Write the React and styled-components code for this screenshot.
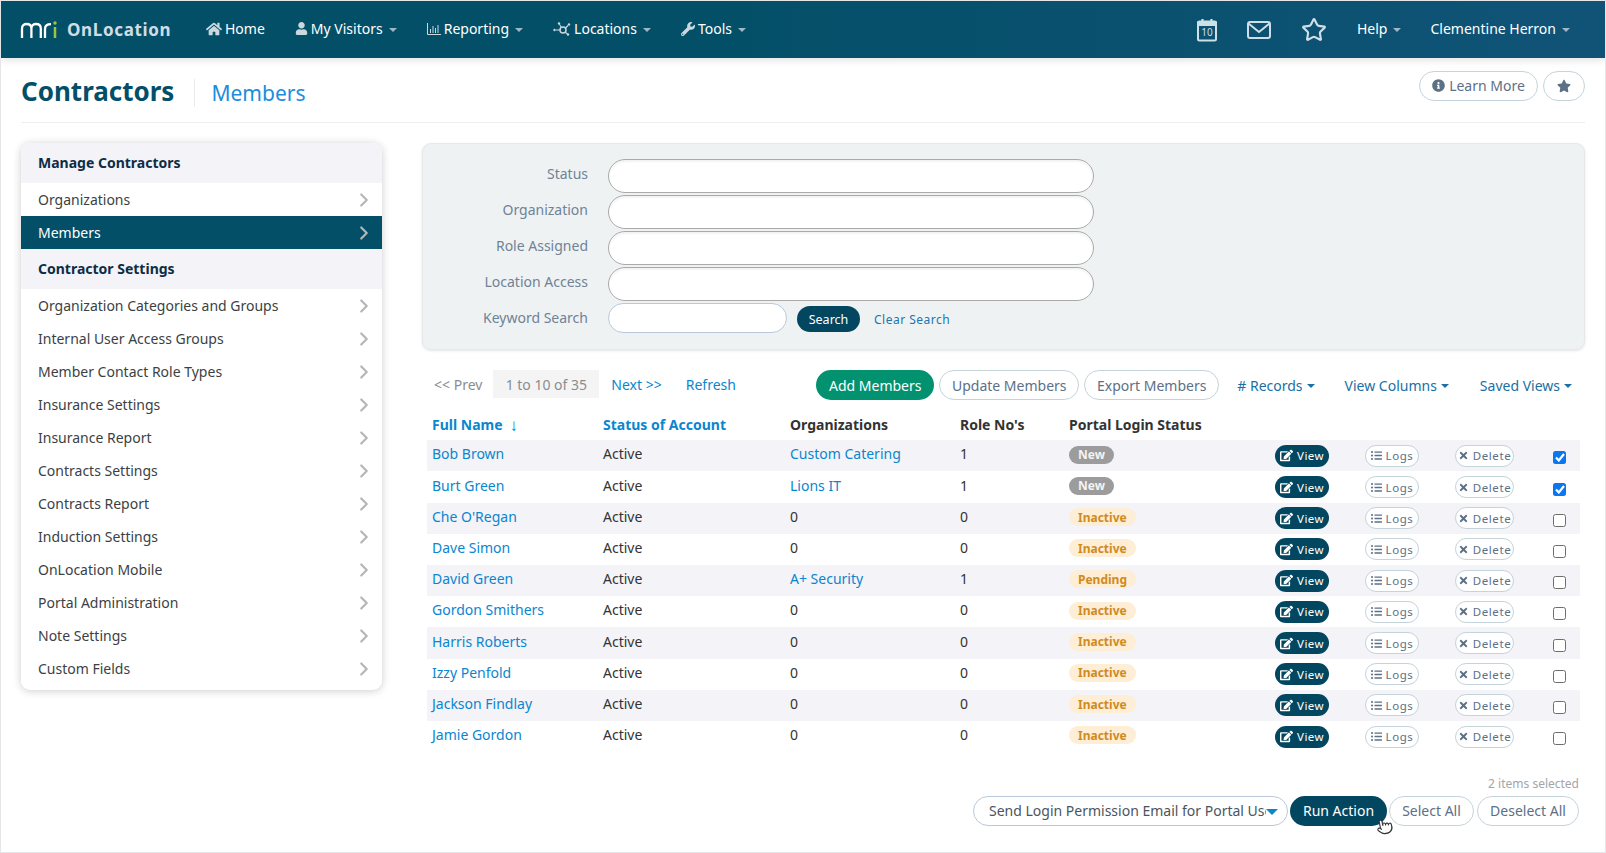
import React from "react";
import styled, { createGlobalStyle } from "styled-components";
import { FaHome, FaUser, FaWrench, FaInfoCircle, FaStar, FaEdit, FaListUl, FaTimes } from "react-icons/fa";
import { Star, Pointer, ChevronRight } from "lucide-react";

const Global = createGlobalStyle`
  html, body { margin: 0; padding: 0; background: #fff; }
  * { box-sizing: border-box; }
  body { font-family: "Noto Sans", "Open Sans", sans-serif; font-size: 14px; color: #333; }
`;

const Page = styled.div`
  width: 1606px; height: 853px; border: 1px solid #e4e6e8; overflow: hidden; display: flex; flex-direction: column;
`;
const Navbar = styled.header`
  height: 57px; flex: none; display: flex; align-items: center; padding: 0 35px 2px 19px;
  background: linear-gradient(90deg, #044f68 0%, #044f68 45%, #105377 100%);
  box-shadow: 0 2px 8px rgba(0,0,0,.12); color: #fff;
`;
const Brand = styled.div`
  display: flex; align-items: center; width: 186px; gap: 9px; margin-top: 2px;
  span { font-weight: 700; font-size: 17px; letter-spacing: .65px; color: #cfdde5; line-height: 1; }
`;
const NavItem = styled.div`
  display: flex; align-items: center; font-size: 14px; color: #fff; margin-right: ${p => p.$mr || 0}px; white-space: nowrap;
  svg.i { color: #cbd8df; margin-right: ${p => p.$ig ?? 3}px; flex: none; }
`;
const Caret = styled.i`
  display: inline-block; width: 0; height: 0; margin-left: ${p => p.$ml ?? 6}px; margin-top: 2px;
  border-left: 4px solid transparent; border-right: 4px solid transparent; border-top: 4px solid ${p => p.$c || "#9fb8c5"};
`;
const NavRight = styled.div`
  margin-left: auto; display: flex; align-items: center;
`;
const IconSlot = styled.div`
  display: flex; margin-right: ${p => p.$mr}px; margin-top: 2px; color: #cfdfe8;
`;
const Container = styled.div`
  flex: 1; padding: 0 20px; display: flex; flex-direction: column;
`;
const TitleRow = styled.div`
  height: 65px; flex: none; display: flex; align-items: center; border-bottom: 1px solid #eceef0;
`;
const Title = styled.h1`
  margin: 0; font-size: 26px; font-weight: 700; color: #034f68; line-height: 28px; padding-right: 20px; margin-top: 1px;
`;
const Sub = styled.div`
  border-left: 1px solid #e8eaec; height: 28px; margin-top: 6px; padding-left: 16px; font-size: 21px; line-height: 28px; color: #1a8ddc;
`;
const TitleActions = styled.div`
  margin-left: auto; display: flex; gap: 5px; margin-top: -9px;
`;
const OutlineBtn = styled.button`
  font-family: inherit; font-size: ${p => p.$fs || 14}px; color: #5c7086; background: #fff; border: 1px solid #c5d3da;
  border-radius: 16px; height: ${p => p.$h || 30}px; width: ${p => p.$w}px; padding: 0; display: inline-flex;
  align-items: center; justify-content: center; gap: 4px; white-space: nowrap; letter-spacing: ${p => p.$ls || 0}px;
`;
const SolidBtn = styled.button`
  font-family: inherit; font-size: ${p => p.$fs || 14}px; color: #fff; background: ${p => p.$bg || "#034660"}; border: 0;
  border-radius: 16px; height: ${p => p.$h || 30}px; width: ${p => p.$w}px; padding: 0; display: inline-flex;
  align-items: center; justify-content: center; gap: 4px; white-space: nowrap; letter-spacing: ${p => p.$ls || 0}px;
`;
const Main = styled.div`
  display: grid; grid-template-columns: 361px 1fr; column-gap: 40px; padding-top: 20px;
`;
const Side = styled.nav`
  background: #fff; border-radius: 9px; box-shadow: 0 1px 8px rgba(0,0,0,.2); overflow: hidden; align-self: start; height: 547px;
`;
const SideHead = styled.div`
  height: 40px; background: #f3f3f8; padding: 0 0 2px 17px; display: flex; align-items: center; font-weight: 700; font-size: 14px; color: #0d2d45;
`;
const SideItem = styled.div`
  height: 33px; padding: 0 7px 0 17px; display: flex; align-items: center; justify-content: space-between; font-size: 14px;
  color: ${p => p.$on ? "#fff" : "#3c3f44"}; background: ${p => p.$on ? "#034f68" : "#fff"};
  svg { color: #b4b6b8; }
`;
const Right = styled.section`
  min-width: 0;
`;
const Filter = styled.div`
  height: 207px; background: #eff2f3; border: 1px solid #e6e9eb; border-radius: 9px; box-shadow: 0 1px 3px rgba(0,0,0,.1);
  padding: 15px 0 0; display: grid; grid-template-columns: 165px 486px; grid-auto-rows: 36px; column-gap: 20px; align-content: start;
`;
const FLabel = styled.label`
  text-align: right; color: #6f8296; font-size: 14px; line-height: 30px;
`;
const Pill = styled.input`
  width: 486px; height: 34px; border: 1px solid #aaa; border-radius: 17px; background: #fff; box-shadow: inset 0 2px 2px rgba(0,0,0,.05); outline: 0; display: block;
`;
const KeywordRow = styled.div`
  display: flex; align-items: flex-start; gap: 10px;
`;
const Keyword = styled.input`
  width: 179px; height: 30px; border: 1px solid #b9c8da; border-radius: 15px; background: #fff; outline: 0; display: block;
`;
const ClearLink = styled.a`
  color: #1a76ad; font-size: 12px; letter-spacing: .5px; margin: 8px 0 0 4px;
`;
const Toolbar = styled.div`
  display: flex; align-items: center; height: 30px; margin-top: 20px; padding-left: 12px;
`;
const Muted = styled.span` color: #8a8d90; `;
const PagerBox = styled.span`
  margin-left: 11px; width: 106px; height: 28px; background: #f4f4f5; color: #8a8d90; display: flex; align-items: center; justify-content: center; margin-top: -2px;
`;
const Blue = styled.a`
  color: ${p => p.$c || "#0a86cf"}; margin-left: ${p => p.$ml || 0}px; margin-top: ${p => p.$mt ?? -2}px; display: inline-flex; align-items: center; white-space: nowrap;
`;
const ToolActions = styled.div`
  margin-left: auto; display: flex; align-items: center; gap: 5px; padding-right: 13px;
`;
const Table = styled.div`
  margin: 10.3px 5px 0 5px; display: grid; grid-template-columns: 171px 187px 170px 109px 206px 90px 90px 95px 35px;
`;
const HeadCell = styled.div`
  height: 30px; padding: 0 0 2px 5px; display: flex; align-items: center; font-weight: 700; font-size: 14px; color: ${p => p.$link ? "#0a86cf" : "#333"}; white-space: nowrap;
`;
const SortArrow = styled.span`
  font-size: 17px; font-weight: 400; margin-left: 7px; line-height: 1;
`;
const Row = styled.div`
  display: contents;
  & > div { background: ${p => p.$odd ? "#f3f3f8" : "#fff"}; }
`;
const Cell = styled.div`
  height: 31.2px; padding: 0 0 4px 5px; display: flex; align-items: center; white-space: nowrap; color: ${p => p.$link ? "#0a86cf" : "#333"};
`;
const BtnCell = styled.div`
  height: 31.2px; padding-left: 5px; display: flex; align-items: center;
`;
const CheckCell = styled.div`
  height: 31.2px; padding: 4px 0 0 8px; display: flex; align-items: center;
`;
const Badge = styled.span`
  height: 18px; border-radius: 9px; padding: 0 9px; font-size: 12px; font-weight: 700; display: inline-flex; align-items: center; margin-top: 1.5px;
  color: ${p => p.$new ? "#f3f3f3" : "#d08a1e"}; background: ${p => p.$new ? "#9c9c9c" : "#fdeed5"};
`;
const Check = styled.span`
  width: 13px; height: 13px; border-radius: 2.5px; display: flex; align-items: center; justify-content: center;
  background: ${p => p.$on ? "#0b76f0" : "#fff"}; border: ${p => p.$on ? "0" : "1px solid #6d6d6d"};
`;
const Footer = styled.div`
  margin-top: 22.7px; display: flex; flex-direction: column; align-items: flex-end; padding-right: 6px;
`;
const Selected = styled.div`
  color: #a3a6a9; font-size: 12px; line-height: 18px; margin-bottom: 3px;
`;
const ActionBar = styled.div`
  position: relative; display: flex; align-items: center;
`;
const Picker = styled.div`
  width: 315px; height: 30px; border: 1px solid #b9c8da; border-radius: 15px; padding: 0 9px 0 15px; display: flex; align-items: center; color: #4b5560; margin-right: 2px;
  span { flex: 1; overflow: hidden; white-space: nowrap; }
`;
const Cursor = styled.div`
  position: absolute; left: 403px; top: 22px; display: flex; transform: rotate(-12deg);
`;

const menu1 = ["Organization Categories and Groups","Internal User Access Groups","Member Contact Role Types","Insurance Settings","Insurance Report","Contracts Settings","Contracts Report","Induction Settings","OnLocation Mobile","Portal Administration","Note Settings","Custom Fields"];
const rows = [
  ["Bob Brown","Custom Catering","1","New",true],
  ["Burt Green","Lions IT","1","New",true],
  ["Che O'Regan","0","0","Inactive",false],
  ["Dave Simon","0","0","Inactive",false],
  ["David Green","A+ Security","1","Pending",false],
  ["Gordon Smithers","0","0","Inactive",false],
  ["Harris Roberts","0","0","Inactive",false],
  ["Izzy Penfold","0","0","Inactive",false],
  ["Jackson Findlay","0","0","Inactive",false],
  ["Jamie Gordon","0","0","Inactive",false],
];

const Logo = () => (
  <svg width="38" height="18" viewBox="0 0 38 18" fill="none" strokeWidth="2.3" strokeLinecap="butt">
    <path d="M2 17V7.500C2 4.500 4 3 6.700 3S11.400 4.500 11.400 7.500V17M11.400 7.500C11.400 4.500 13.400 3 16.100 3S20.800 4.500 20.800 7.500V17" stroke="#fff" />
    <path d="M25 17V8C25 4.800 27 3.200 31 3.200" stroke="#fff" />
    <path d="M35 6V17" stroke="#9ec43c" strokeWidth="2.500" />
    <circle cx="35" cy="2" r="1.700" fill="#9ec43c" stroke="none" />
  </svg>
);
const BarsIcon = () => (
  <svg className="i" width="14" height="12" viewBox="0 0 14 12" fill="none" stroke="#cbd8df" strokeWidth="1">
    <path d="M.5 0v11.500H14M3.500 10V6M6 10V3M8.500 10V5M11 10V2" />
  </svg>
);
const NodesIcon = () => (
  <svg className="i" width="18" height="14" viewBox="0 0 18 14" fill="#cbd8df" stroke="#cbd8df">
    <circle cx="1.500" cy="8" r="1.200" stroke="none" />
    <circle cx="6" cy="1.500" r="1.200" stroke="none" />
    <circle cx="16" cy="2.500" r="1.200" stroke="none" />
    <circle cx="15" cy="12.500" r="1.200" stroke="none" />
    <circle cx="10" cy="8" r="3" fill="none" strokeWidth="1.500" />
    <path d="M3 8h4M6.500 2.500l2 3M15 3.500l-3 3M14.500 12l-2.500-2" fill="none" strokeWidth="1.100" />
  </svg>
);
const CalendarIcon = () => (
  <svg width="22" height="24" viewBox="0 0 22 24" fill="none" stroke="#cfdfe8" strokeWidth="2">
    <rect x="2" y="3.500" width="18" height="19" rx="1.500" />
    <path d="M2 4.500h18v2.500H2z" fill="#cfdfe8" />
    <path d="M6.500 1v4M15.500 1v4" strokeWidth="2.200" />
    <text x="11" y="18" textAnchor="middle" fontSize="10" fontFamily="Noto Sans" fill="#cfdfe8" stroke="none">10</text>
  </svg>
);
const MailIcon = () => (
  <svg width="24" height="18" viewBox="0 0 24 18" fill="none" stroke="#cfdfe8" strokeWidth="2">
    <rect x="1" y="1" width="22" height="16" rx="2" />
    <path d="M1.500 2.500 12 11 22.500 2.500" />
  </svg>
);
const Tick = () => (
  <svg width="10" height="9" viewBox="0 0 10 9" fill="none" stroke="#fff" strokeWidth="2.200"><path d="M1 4.500 3.800 7.500 9 1" /></svg>
);
const BlueTri = () => <Caret $ml={0} $c="#0a86cf" style={{ borderLeftWidth: 6, borderRightWidth: 6, borderTopWidth: 6 }} />;
const Chev = () => <ChevronRight size={22} strokeWidth={2.4} />;

export default function App() {
  return (
    <>
      <Global />
      <Page>
        <Navbar>
          <Brand><Logo /><span>OnLocation</span></Brand>
          <NavItem $mr={30}><FaHome className="i" size={16} />Home</NavItem>
          <NavItem $mr={30}><FaUser className="i" size={13} />My Visitors<Caret /></NavItem>
          <NavItem $mr={30}><BarsIcon />Reporting<Caret /></NavItem>
          <NavItem $mr={30}><NodesIcon />Locations<Caret /></NavItem>
          <NavItem><FaWrench className="i" size={14} />Tools<Caret /></NavItem>
          <NavRight>
            <IconSlot $mr={29}><CalendarIcon /></IconSlot>
            <IconSlot $mr={30}><MailIcon /></IconSlot>
            <IconSlot $mr={30}><Star size={26} strokeWidth={2} /></IconSlot>
            <NavItem $mr={29}>Help<Caret /></NavItem>
            <NavItem>Clementine Herron<Caret /></NavItem>
          </NavRight>
        </Navbar>
        <Container>
          <TitleRow>
            <Title>Contractors</Title>
            <Sub>Members</Sub>
            <TitleActions>
              <OutlineBtn $w={119}><FaInfoCircle size={13} />Learn More</OutlineBtn>
              <OutlineBtn $w={42}><FaStar size={14} /></OutlineBtn>
            </TitleActions>
          </TitleRow>
          <Main>
            <Side>
              <SideHead>Manage Contractors</SideHead>
              <SideItem>Organizations<Chev /></SideItem>
              <SideItem $on>Members<Chev /></SideItem>
              <SideHead>Contractor Settings</SideHead>
              {menu1.map(m => <SideItem key={m}>{m}<Chev /></SideItem>)}
            </Side>
            <Right>
              <Filter>
                <FLabel>Status</FLabel><Pill />
                <FLabel>Organization</FLabel><Pill />
                <FLabel>Role Assigned</FLabel><Pill />
                <FLabel>Location Access</FLabel><Pill />
                <FLabel>Keyword Search</FLabel>
                <KeywordRow>
                  <Keyword />
                  <SolidBtn $w={63} $h={26} $fs={12.5} style={{ marginTop: 3 }}>Search</SolidBtn>
                  <ClearLink>Clear Search</ClearLink>
                </KeywordRow>
              </Filter>
              <Toolbar>
                <Muted style={{ marginTop: -2 }}>&lt;&lt; Prev</Muted>
                <PagerBox>1 to 10 of 35</PagerBox>
                <Blue $ml={12}>Next &gt;&gt;</Blue>
                <Blue $ml={24}>Refresh</Blue>
                <ToolActions>
                  <SolidBtn $w={118} $bg="#029270">Add Members</SolidBtn>
                  <OutlineBtn $w={140}>Update Members</OutlineBtn>
                  <OutlineBtn $w={135}>Export Members</OutlineBtn>
                  <Blue $c="#1a6fa3" $ml={13} $mt={0}># Records<Caret $ml={4} $c="#1a6fa3" /></Blue>
                  <Blue $c="#1a6fa3" $ml={25} $mt={0}>View Columns<Caret $ml={4} $c="#1a6fa3" /></Blue>
                  <Blue $c="#1a6fa3" $ml={26} $mt={0}>Saved Views<Caret $ml={4} $c="#1a6fa3" /></Blue>
                </ToolActions>
              </Toolbar>
              <Table>
                <HeadCell $link>Full Name<SortArrow>↓</SortArrow></HeadCell>
                <HeadCell $link>Status of Account</HeadCell>
                <HeadCell>Organizations</HeadCell>
                <HeadCell>Role No's</HeadCell>
                <HeadCell>Portal Login Status</HeadCell>
                <HeadCell /><HeadCell /><HeadCell /><HeadCell />
                {rows.map(([name, org, role, status, on], i) => (
                  <Row key={name} $odd={i % 2 === 0}>
                    <Cell $link>{name}</Cell>
                    <Cell>Active</Cell>
                    <Cell $link={org !== "0"}>{org}</Cell>
                    <Cell>{role}</Cell>
                    <Cell><Badge $new={status === "New"}>{status}</Badge></Cell>
                    <BtnCell><SolidBtn $w={54} $h={22} $fs={11.5} $ls={0.4}><FaEdit size={13} />View</SolidBtn></BtnCell>
                    <BtnCell><OutlineBtn $w={54} $h={22} $fs={11.5} $ls={0.6}><FaListUl size={11} />Logs</OutlineBtn></BtnCell>
                    <BtnCell><OutlineBtn $w={59} $h={22} $fs={11.5} $ls={0.6}><FaTimes size={11} />Delete</OutlineBtn></BtnCell>
                    <CheckCell><Check $on={on}>{on && <Tick />}</Check></CheckCell>
                  </Row>
                ))}
              </Table>
              <Footer>
                <Selected>2 items selected</Selected>
                <ActionBar>
                  <Picker><span>Send Login Permission Email for Portal Users</span><BlueTri /></Picker>
                  <SolidBtn $w={97}>Run Action</SolidBtn>
                  <OutlineBtn $w={85} style={{ marginLeft: 2 }}>Select All</OutlineBtn>
                  <OutlineBtn $w={102} style={{ marginLeft: 3 }}>Deselect All</OutlineBtn>
                  <Cursor><Pointer size={17} fill="#fff" color="#333" strokeWidth={1.6} /></Cursor>
                </ActionBar>
              </Footer>
            </Right>
          </Main>
        </Container>
      </Page>
    </>
  );
}
